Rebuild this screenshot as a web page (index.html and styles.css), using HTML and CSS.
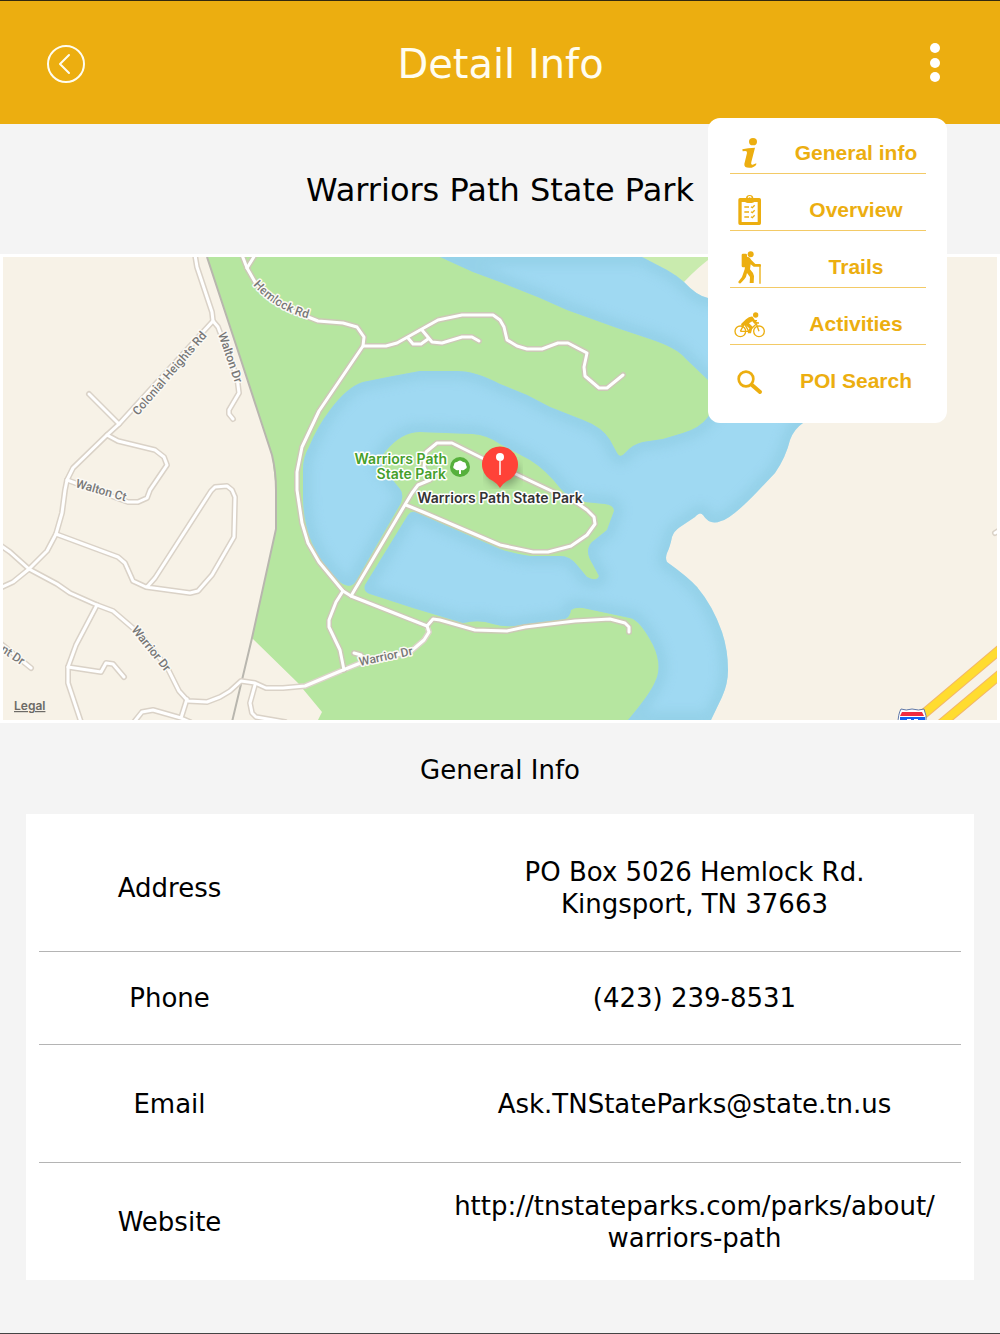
FILE: index.html
```html
<!DOCTYPE html>
<html lang="en">
<head>
	<title>Detail Info</title>
	<meta charset="utf-8">
	<meta name="viewport" content="width=device-width, initial-scale=1">
	<link rel="stylesheet" href="styles.css">
</head>

<body>

<header class="topbar">
	<button class="icon-button" type="button" aria-label="Back">
		<svg viewBox="0 0 38 38"><circle cx="19" cy="19" r="18" /><path d="M22 10 L13 19 L22 28" /></svg>
	</button>
	<h1>Detail Info</h1>
	<button class="icon-button dots" type="button" aria-label="Menu">
		<svg viewBox="0 0 38 38"><circle cx="19" cy="3" r="5" /><circle cx="19" cy="18" r="5" /><circle cx="19" cy="32" r="5" /></svg>
	</button>

	<nav class="menu">
		<ul>
			<li><a href="#general">
				<svg viewBox="0 0 114 120">
					<ellipse cx="66" cy="26" rx="12" ry="11" />
					<path d="M34 49 Q50 45 72 44 L61 87 Q59 96 65 95 Q70 94 76 91 Q77 100 62 104 Q39 107 40 93 L48 60 Q49 54 43 54 L35 55 Z" />
				</svg>
				<span>General info</span>
			</a></li>
			<li><a href="#overview">
				<svg viewBox="0 0 114 120">
					<path d="M27 24 H85 Q90 24 90 29 V100 Q90 105 85 105 H27 Q22 105 22 100 V29 Q22 24 27 24 Z M32 36 V96 H80 V36 Z" fill-rule="evenodd" />
					<path d="M39 24 H45 Q46 15 56 15 Q66 15 67 24 H73 V32 Q70 39 56 39 Q42 39 39 32 Z" />
					<path class="cut" d="M51 23 Q56 17 61 23" />
					<path class="line" d="M40 51 H54 M40 66 H54 M40 81 H54 M60 50 L64 53 L71 46 M60 65 L64 68 L71 61 M60 80 L64 83 L71 76" />
				</svg>
				<span>Overview</span>
			</a></li>
			<li><a href="#trails">
				<svg viewBox="0 0 114 120">
					<circle cx="59" cy="22" r="9" />
					<rect x="32" y="20" width="16" height="41" rx="4" />
					<path d="M46 29 Q56 28 61 39 L73 51 H87 Q91 52 90 56 L88 59 H68 L59 52 L57 67 Q67 77 69 87 L68 108 H56 L57 90 L48 78 Q46 92 40 97 L29 109 Q21 110 22 104 L33 90 L41 67 Z" />
					<path class="line" d="M87 56 V110" />
				</svg>
				<span>Trails</span>
			</a></li>
			<li><a href="#activities">
				<svg viewBox="0 0 114 120">
					<circle class="wheel" cx="28" cy="82" r="16" />
					<circle class="wheel" cx="84" cy="82" r="16" />
					<circle cx="74" cy="33" r="8" />
					<path class="wheel" d="M28 82 L39 61 M28 82 H53 L75 61 M42 62 L52 80 M84 82 L73 51 M68 50 H78" />
					<path d="M31 59 L45 46 Q56 36 65 38 Q71 47 75 54 L84 55 V59 H70 L64 52 L54 58 L65 68 L60 88 H50 L55 73 L43 63 L33 66 Q28 64 31 59 Z" />
				</svg>
				<span>Activities</span>
			</a></li>
			<li><a href="#search">
				<svg viewBox="0 0 114 120">
					<circle class="lens" cx="45" cy="54" r="22" />
					<path class="handle" d="M63 72 L87 93" />
				</svg>
				<span>POI Search</span>
			</a></li>
		</ul>
	</nav>
</header>

<main>
	<h2 class="park-name">Warriors Path State Park</h2>

	<div class="map">
		<svg viewBox="3 257 994 463">
			<defs>
				<path id="river" d="M440 257 L473 272 L500 282 L540 298 L567 310 L617 328 L650 339 Q677 348 685 358 L708 380 Q720 400 708 417 Q700 428 683 433 L663 439 L643 442 Q633 444 625 453 Q620 459 617 453 L610 440 Q602 427 583 420 L550 407 L527 395 L500 384 Q475 371 457 371 L420 371 L393 376 L363 382 Q347 387 330 410 Q317 427 309 447 Q303 457 303 470 L303 495 Q303 522 312 543 Q321 564 340 582 Q351 590 356 581 L401 503 Q404 494 400 489 L382 467 Q380 458 385 452 Q401 432 420 432 L473 434 Q487 435 500 444 L530 460 Q546 470 560 488 Q570 500 585 502 L605 504 Q614 505 614 511 L607 530 L592 542 Q584 550 592 563 L599 576 Q597 582 587 577 L577 565 Q570 556 560 556 L530 556 Q514 554 500 549 L415 512 Q411 511 408 515 L365 585 Q363 592 370 594 L413 608 L463 623 Q480 619 493 624 Q507 628 520 625 L565 619 Q570 617 571 610 Q575 607 583 608 L630 618 Q640 620 653 645 Q663 666 655 682 Q650 694 628 720 L711 720 L722 697 Q728 684 728 670 Q728 650 722 632 Q713 606 697 587 Q688 577 667 562 Q665 558 667 553 Q670 547 672 537 Q674 531 680 527 L695 517 Q700 511 703 515 Q710 526 721 521 Q731 519 757 492 L775 473 Q786 457 790 440 Q794 429 803 423 L840 370 L760 305 L708 298 Q697 296 684 282 Q676 275 667 270 L642 257 Z" />
				<clipPath id="water-clip"><use href="#river" /></clipPath>
				<filter id="soft" x="-10%" y="-10%" width="120%" height="120%"><feGaussianBlur stdDeviation="5" /></filter>
				<g id="streets">
					<path d="M195 255 L197 267 L212 312 L213 321 L119 424 L107 435 L73 468 L67 480 L65 490 L62 513 L56 534 L47 551 L29 569 L13 582 L0 588" />
					<path d="M213 321 L218 327 L237 377 L239 393 L229 410 L229 414 L233 419" />
					<path d="M89 394 L119 424" />
					<path d="M107 435 L118 441 L155 450 L164 457 L167 465 L150 490 L147 498 L138 502 L128 502 L67 480" />
					<path d="M56 534 L118 557 L125 563 L133 581 L146 587 L190 593 L198 591 L212 575 L234 537 L235 497 L232 490 L227 486 L215 487 L211 491 L155 578 L147 587" />
					<path d="M0 545 L10 552 L29 569 L57 584 L70 593 L97 605 L113 611 L127 623 L141 635 L167 667 L179 691 L188 701 L207 702 L220 697 L230 691 L241 681 L255 683 L266 688 L283 688 L305 686 L343 670 L363 662 L410 652 L424 640 L429 632 L427 626" />
					<path d="M97 605 L76 645 L68 667 L68 683 L81 722" />
					<path d="M68 667 L101 672 L106 663 L113 664 L124 677" />
					<path d="M187 699 L181 718 M134 722 L142 712 L153 710 L181 718 L190 722" />
					<path d="M255 685 L250 703 L252 713 L256 717 L285 722" />
					<path d="M0 643 L31 668" />
					<path d="M1000 530 L995 533" />
				</g>
				<g id="park-roads">
					<path d="M242 255 L247 268 L255 282 Q275 306 303 315 L318 321 L343 323 L357 327 L364 337 L363 346 L319 411 L302 447 L297 472 L297 490 L302 523 L308 543 L319 562 L343 591 L351 596 L427 626 L433 619 L440 620 L475 630 L507 631 L525 627 L575 621 L610 619 L625 623 L629 627 L629 632" />
					<path d="M255 255 L247 268" />
					<path d="M363 346 L386 346 L397 343 L438 320 L462 315 L493 315 L500 320 L504 327 L507 340 L517 346 L527 349 L542 349 L558 343 L568 343 L587 353 L584 367 L585 376 L599 388 L607 388 L623 375" />
					<path d="M422 330 L432 342 L442 343 L462 337 L472 337 L479 341" />
					<path d="M408 338 L413 344 L421 344 L428 339" />
					<path d="M351 596 L406 503 L412 493 L418 485 L430 480 L424 467 L426 452 L437 443 L452 443 L482 458 L577 503 L587 510 L594 517 L595 524 L587 535 L571 546 L548 552 L533 552 L500 545 L423 512 L406 505" />
					<path d="M343 591 L336 602 L329 620 L329 627 L340 650 L344 670" />
					<path d="M354 653 L361 655 L364 660" />
				</g>
				<path id="hemlock" d="M253 285 Q274 309 306 318" />
				<path id="colonial" d="M138 416 L207 336" />
			</defs>

			<rect class="land" x="3" y="257" width="994" height="463" />
			<path class="park" d="M207 257 L240 357 L272 455 L276 490 L276 529 L252 638 L298 683 L322 712 L318 720 H640 L780 500 L642 257 Z" />
			<path class="land" d="M660 720 L727 653 L697 587 L650 560 L660 500 L760 470 L790 410 H1000 V720 Z" />
			<path class="land" d="M684 282 Q695 270 708 260 H800 V320 H700 Z" />
			<path class="land" d="M900 257 H997 V450 H900 Z" />
			<path class="meadow" d="M642 257 H712 Q698 267 684 282 L660 275 Z" />
			<use class="water" href="#river" />
			<g clip-path="url(#water-clip)"><use class="shore" href="#river" /></g>
			<path class="rail" d="M207 257 L240 357 L272 455 Q276 472 276 490 V529 L252 638 L232 722" />

			<use class="casing" href="#streets" />
			<use class="casing in-park" href="#park-roads" />
			<use class="road" href="#streets" />
			<use class="road" href="#park-roads" />

			<path class="highway-edge" d="M1003 647 L920 717 M1003 672 L935 729" />
			<path class="highway" d="M1003 647 L920 717 M1003 672 L935 729" />

			<!-- interstate shield -->
			<path class="shield" d="M901 709 Q906 711 912 709 Q919 711 924 709 Q927 715 926 724 H898 Q898 714 901 709 Z" />
			<path class="shield-red" d="M902 712 H922 L924 716 H900 Z" />
			<path class="shield-blue" d="M900 717 H925 V724 H900 Z" />
			<path class="shield-number" d="M907 720 H911 M914 720 H918" />

			<g class="street-name">
				<text><textPath href="#hemlock">Hemlock Rd</textPath></text>
				<text><textPath href="#colonial">Colonial Heights Rd</textPath></text>
				<text transform="translate(218 334) rotate(71)">Walton Dr</text>
				<text transform="translate(75 487) rotate(16)">Walton Ct</text>
				<text transform="translate(131 630) rotate(51)">Warrior Dr</text>
				<text transform="translate(360 666) rotate(-12)">Warrior Dr</text>
				<text transform="translate(0 651) rotate(34)">nt Dr</text>
			</g>

			<g class="park-label">
				<text x="447" y="464">Warriors Path</text>
				<text x="446" y="479">State Park</text>
			</g>
			<circle class="tree-badge" cx="460" cy="467" r="10" />
			<path class="tree" d="M459 474 V470 Q456 471 455 469 Q452 468 454 465 Q454 462 457 462 Q460 459 463 462 Q466 462 466 465 Q468 468 465 469 Q464 471 461 470 V474 Z" />

			<ellipse class="pin-shadow" cx="503" cy="473" rx="16" ry="13" />
			<path class="pin" d="M500 488 Q498 484 493 481 A18 18 0 1 1 507 481 Q502 484 500 488 Z" />
			<circle class="pin-head" cx="500" cy="457" r="4" />
			<path class="pin-needle" d="M500 461 V475" />
			<text class="pin-label" x="500" y="503">Warriors Path State Park</text>

			<a href="#legal"><text class="legal" x="14" y="710">Legal</text></a>
		</svg>
	</div>

	<section id="general">
		<h3>General Info</h3>
		<table class="info">
			<tr>
				<th scope="row">Address</th>
				<td>PO Box 5026 Hemlock Rd.<br>Kingsport, TN 37663</td>
			</tr>
			<tr>
				<th scope="row">Phone</th>
				<td><a href="tel:4232398531">(423) 239-8531</a></td>
			</tr>
			<tr>
				<th scope="row">Email</th>
				<td><a href="mailto:Ask.TNStateParks@state.tn.us">Ask.TNStateParks@state.tn.us</a></td>
			</tr>
			<tr>
				<th scope="row">Website</th>
				<td><a href="http://tnstateparks.com/parks/about/warriors-path">http://tnstateparks.com/parks/about/<wbr>warriors-path</a></td>
			</tr>
		</table>
	</section>
</main>

</body>
</html>
```
FILE: styles.css
```css
* {
	box-sizing: border-box;
}
body {
	min-height: 100vh;
	margin: 0;
	border-top: 1px solid #33290f;
	border-bottom: 1px solid #444;
	color: #000;
	background: #f4f4f4;
	font-family: Verdana, "DejaVu Sans", sans-serif;
	font-size: 26px;
	line-height: 32px;
}
h1, h2, h3 {
	margin: 0;
	font-weight: normal;
	text-align: center;
}
ul {
	margin: 0;
	padding: 0;
	list-style: none;
}
a {
	color: inherit;
	text-decoration: none;
}

.topbar {
	position: relative;
	display: flex;
	align-items: center;
	justify-content: space-between;
	height: 123px;
	padding: 2px 46px 0 47px;
	color: #fffdf0;
	background: #ecae10;
}
.topbar h1 {
	font-size: 40px;
	line-height: 48px;
}
.icon-button {
	width: 38px;
	height: 38px;
	padding: 0;
	border: 0;
	background: none;
	cursor: pointer;
}
.icon-button svg {
	display: block;
	overflow: visible;
	fill: none;
	stroke: #fffdf0;
	stroke-width: 2;
	stroke-linecap: round;
	stroke-linejoin: round;
}
.dots svg {
	fill: #fff;
	stroke: none;
}

.menu {
	position: absolute;
	z-index: 1;
	top: 117px;
	right: 53px;
	width: 239px;
	padding: 15px 21px 22px 22px;
	color: #ecae10;
	background: #fff;
	border-radius: 12px;
	font: bold 21px/40px "Arial Rounded MT Bold", "Liberation Sans", sans-serif;
}
.menu ul {
	display: grid;
	gap: 16px;
}
.menu a {
	display: grid;
	grid-template-columns: 40px 1fr;
	gap: 16px;
	justify-items: center;
	border-bottom: 1px solid #f3ca66;
}
.menu li:last-child a {
	border: 0;
}
.menu svg {
	width: 38px;
	height: 40px;
	fill: #ecae10;
}
.menu .line, .menu .wheel, .menu .lens, .menu .handle, .menu .cut {
	fill: none;
	stroke: #ecae10;
	stroke-width: 4;
}
.menu .cut {
	stroke: #fff;
}
.menu .lens {
	stroke-width: 8;
}
.menu .handle {
	stroke-width: 12;
	stroke-linecap: round;
}

.park-name {
	padding: 46px 16px 44px;
	font-size: 32px;
	line-height: 40px;
}

.map {
	padding: 3px;
	background: #fff;
}
.map svg {
	display: block;
	width: 100%;
}
.land {
	fill: #f7f2e7;
}
.park {
	fill: #b6e6a0;
}
.meadow {
	fill: #c9ebae;
}
.water {
	fill: #9fd9f2;
}
.shore {
	fill: none;
	stroke: #8ccae0;
	stroke-width: 18;
	opacity: 0.5;
	filter: url(#soft);
}
.rail {
	fill: none;
	stroke: #b8b6ae;
	stroke-width: 2;
}
.casing, .road {
	fill: none;
	stroke-linecap: round;
	stroke-linejoin: round;
}
.casing {
	stroke: #dad2c7;
	stroke-width: 6;
}
.in-park {
	stroke: #ccc9b6;
}
.road {
	stroke: #fff;
	stroke-width: 3;
}
.highway-edge {
	stroke: #f3b66a;
	stroke-width: 10;
}
.highway {
	stroke: #ffdc30;
	stroke-width: 8;
}
.shield {
	fill: #fff;
	stroke: #6078a8;
}
.shield-red {
	fill: #f02c40;
}
.shield-blue {
	fill: #1560f0;
}
.shield-number {
	stroke: #fff;
	stroke-width: 2;
}
.map text {
	font-family: Inter, sans-serif;
	font-size: 14px;
	font-weight: 600;
	paint-order: stroke;
	stroke: #fff;
	stroke-width: 3;
	stroke-linejoin: round;
}
.map .street-name text {
	fill: #777;
	stroke: #fbf9f4;
	font-family: Roboto, sans-serif;
	font-size: 12px;
	font-weight: 500;
}
.park-label text {
	fill: #46a02c;
	text-anchor: end;
}
.tree-badge {
	fill: #56b03c;
}
.tree {
	fill: #fff;
}
.pin-shadow {
	fill: #000;
	opacity: 0.3;
	filter: url(#soft);
}
.pin {
	fill: #ff4238;
}
.pin-head {
	fill: #fff;
}
.pin-needle {
	stroke: #ffc8c4;
	stroke-width: 2;
}
.pin-label {
	fill: #333;
	text-anchor: middle;
}
.map .legal {
	fill: #6c6a66;
	stroke: none;
	font-size: 12px;
	text-decoration: underline;
}

#general {
	padding: 0 26px 52px;
}
h3 {
	padding: 31px 0 28px;
	font-size: 26px;
}
.info {
	width: 100%;
	padding: 10px 13px 0;
	border-spacing: 0;
	background: #fff;
}
.info th, .info td {
	height: 118px;
	padding: 0;
	border-bottom: 1px solid #b4b4b4;
	font-weight: normal;
	text-align: center;
}
.info th {
	width: 261px;
}
.info td {
	padding-left: 128px;
}
.info tr:first-child > * {
	height: 128px;
}
.info tr:nth-child(2) > * {
	height: 93px;
}
.info tr:last-child > * {
	height: 117px;
	border: 0;
}
```
